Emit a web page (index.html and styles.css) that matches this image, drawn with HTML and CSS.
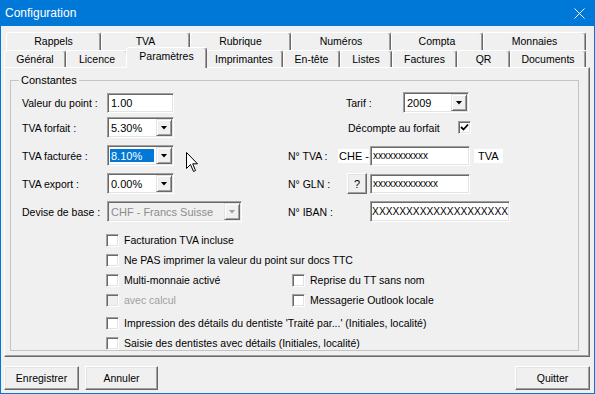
FILE: index.html
```html
<!DOCTYPE html>
<html><head>
	<meta charset="utf-8">
	<title>Configuration</title>
	<link rel="stylesheet" href="styles.css">
</head><body>
	<div id="window">
		<div id="titlebar">
			<span class="title">Configuration</span>
			<svg class="close" width="11" height="11" viewBox="0 0 11 11"><path d="M0.5 0.5L10.5 10.5M10.5 0.5L0.5 10.5" stroke="#fff" stroke-width="1"/></svg>
		</div>

		<div id="tabs">
			<ul class="tabrow back">
				<li>Rappels</li>
				<li>TVA</li>
				<li>Rubrique</li>
				<li>Numéros</li>
				<li>Compta</li>
				<li>Monnaies</li>
			</ul>
			<ul class="tabrow front">
				<li>Général</li>
				<li>Licence</li>
				<li class="active">Paramètres</li>
				<li>Imprimantes</li>
				<li>En-tête</li>
				<li>Listes</li>
				<li>Factures</li>
				<li>QR</li>
				<li>Documents</li>
			</ul>
		</div>

		<div id="panel">
			<fieldset class="group">
				<legend>Constantes</legend>

				<div class="row r1">
					<div class="left">
						<span class="lbl">Valeur du point :</span>
						<span class="edit short">1.00</span>
					</div>
					<div class="right tarif">
						<span class="lbl">Tarif :</span>
						<span class="combo year"><span class="val">2009</span><span class="drop"></span></span>
					</div>
				</div>

				<div class="row r2">
					<div class="left">
						<span class="lbl">TVA forfait :</span>
						<span class="combo short"><span class="val">5.30%</span><span class="drop"></span></span>
					</div>
					<div class="right forfait">
						<span class="lbl">Décompte au forfait</span>
						<span class="box checked"><svg width="9" height="9" viewBox="0 0 9 9"><path d="M1 4L3.5 6.5L8 1.5" fill="none" stroke="#000" stroke-width="1.8"/></svg></span>
					</div>
				</div>

				<div class="row">
					<div class="left">
						<span class="lbl">TVA facturée :</span>
						<span class="combo short"><span class="val sel">8.10%</span><span class="drop"></span></span>
					</div>
					<div class="right">
						<span class="lbl tva">N° TVA :</span>
						<span class="tag che">CHE -</span>
						<span class="edit code small">xxxxxxxxxxx</span>
						<span class="tag suffix">TVA</span>
					</div>
				</div>

				<div class="row">
					<div class="left">
						<span class="lbl">TVA export :</span>
						<span class="combo short"><span class="val">0.00%</span><span class="drop"></span></span>
					</div>
					<div class="right">
						<span class="lbl gln">N° GLN :</span>
						<span class="btn help">?</span>
						<span class="edit code small gln-edit">xxxxxxxxxxxxx</span>
					</div>
				</div>

				<div class="row">
					<div class="left">
						<span class="lbl">Devise de base :</span>
						<span class="combo wide disabled"><span class="val">CHF - Francs Suisse</span><span class="drop"></span></span>
					</div>
					<div class="right">
						<span class="lbl iban">N° IBAN :</span>
						<span class="edit iban-edit">XXXXXXXXXXXXXXXXXXXX</span>
					</div>
				</div>

				<div class="checks">
					<div class="check"><span class="box"></span>Facturation TVA incluse</div>
					<div class="check"><span class="box"></span>Ne PAS imprimer la valeur du point sur docs TTC</div>
					<div class="check pair">
						<div class="half"><span class="box"></span>Multi-monnaie activé</div>
						<div><span class="box"></span>Reprise du TT sans nom</div>
					</div>
					<div class="check pair">
						<div class="half off"><span class="box"></span>avec calcul</div>
						<div><span class="box"></span>Messagerie Outlook locale</div>
					</div>
					<div class="check gap">
						<span class="box"></span>Impression des détails du dentiste 'Traité par...' (Initiales, localité)
					</div>
					<div class="check"><span class="box"></span>Saisie des dentistes avec détails (Initiales, localité)</div>
				</div>
			</fieldset>
		</div>

		<div id="buttons">
			<span class="btn save">Enregistrer</span>
			<span class="btn cancel">Annuler</span>
			<span class="btn quit">Quitter</span>
		</div>

		<svg class="cursor" width="13" height="21" viewBox="0 0 13 21"><path d="M0.5 0.5L0.5 16.5L4.5 12.5L7.5 19.5L9.5 18.5L6.7 11.8L11.5 11.8Z" fill="#fff" stroke="#000" stroke-width="1"/></svg>
	</div>
</body>
</html>
```

FILE: styles.css
```css
* {
	box-sizing: border-box;
}
body {
	margin: 0;
	font-family: "Liberation Sans", Arial, sans-serif;
	font-size: 10.5px;
	color: #000;
}
#window {
	position: relative;
	width: 595px;
	height: 394px;
	background-color: #f0f0f0;
	border: 1px solid #0078d7;
	border-top: 0;
	display: flex;
	flex-direction: column;
}

/* title bar */
#titlebar {
	height: 26px;
	flex: none;
	display: flex;
	align-items: center;
	justify-content: space-between;
	padding: 0 9px 0 4px;
	background-color: #0078d7;
	color: #fff;
	font-size: 12px;
}
.close {
	display: block;
}

/* tabs */
#tabs {
	padding-top: 6px;
	flex: none;
}
.tabrow {
	display: grid;
	margin: 0;
	padding: 0;
	list-style: none;
}
.tabrow.back {
	height: 18px;
	margin-left: 5px;
	grid-template-columns: 95px 89px 101px 100px 92px 103px;
}
.tabrow.front {
	height: 17px;
	margin-left: 3px;
	grid-template-columns: 62px 62px 77px 78px 57px 52px 65px 53px 76px;
}
.tabrow li {
	text-align: center;
	background-color: #f0f0f0;
	border-top: 1px solid #fff;
	border-left: 1px solid #fff;
	border-right: 1px solid #696969;
	box-shadow: inset -1px 0 #a0a0a0;
	border-radius: 3px 3px 0 0;
	line-height: 16px;
}
.tabrow.back li {
	line-height: 17px;
}
.tabrow li.active {
	position: relative;
	z-index: 1;
	height: 21px;
	margin: -3px -2px 0;
	line-height: 17px;
}

/* panel */
#panel {
	height: 290px;
	flex: none;
	margin: 0 4px 0 3px;
	padding: 6px 10px 0 5px;
	border: 1px solid;
	border-color: #fff #696969 #696969 #fff;
	box-shadow: inset -1px -1px #a0a0a0;
}
.group {
	height: 277px;
	margin: 0;
	padding: 0;
	min-width: 0;
	border: 1px solid #c4c4c4;
}
.group legend {
	margin-left: 8px;
	padding: 0 2px;
	line-height: 13px;
	font-size: 11px;
}

.row {
	display: flex;
	align-items: center;
	height: 21px;
	margin-top: 7px;
}
.row.r1 {
	margin-top: 5px;
}
.row.r2 {
	margin-top: 4px;
}
.left {
	width: 277px;
	flex: none;
	display: flex;
	align-items: center;
	padding-left: 11px;
}
.left .lbl {
	width: 85px;
}
.right {
	display: flex;
	align-items: center;
}
.right.tarif {
	padding-left: 58px;
}
.right.tarif .lbl {
	width: 57px;
}
.right.forfait {
	padding-left: 60px;
}
.right.forfait .lbl {
	width: 110px;
}
.lbl.tva {
	width: 50px;
}
.lbl.gln {
	width: 59px;
}
.lbl.iban {
	width: 82px;
}

/* sunken fields */
.edit, .combo {
	display: flex;
	align-items: center;
	background-color: #fff;
	border: 1px solid;
	border-color: #a0a0a0 #fff #fff #a0a0a0;
	box-shadow: inset 1px 1px #696969, inset -1px -1px #e3e3e3;
	white-space: nowrap;
	overflow: hidden;
}
.edit {
	height: 20px;
	padding: 0 3px;
	font-size: 11px;
}
.edit.short {
	width: 67px;
}
.edit.code {
	width: 100px;
	margin-left: 1px;
}
.edit.small {
	font-size: 10px;
	padding-left: 2px;
}
.edit.gln-edit {
	margin-left: 3px;
}
.edit.iban-edit {
	width: 140px;
	height: 21px;
	justify-content: flex-end;
	font-size: 10.2px;
	padding: 0 1px 0 2px;
}
.combo {
	height: 21px;
	padding: 2px 1px 2px 2px;
	font-size: 11px;
}
.combo.short {
	width: 67px;
}
.combo.year {
	width: 66px;
}
.combo.wide {
	width: 135px;
}
.combo .val {
	flex: 1;
	padding-left: 1px;
	overflow: hidden;
}
.combo .val.sel {
	align-self: stretch;
	display: flex;
	align-items: center;
	margin: 1px 2px 1px 0;
	background-color: #0078d7;
	color: #fff;
}
.drop {
	width: 16px;
	height: 17px;
	flex: none;
	display: flex;
	align-items: center;
	justify-content: center;
	background-color: #f0f0f0;
	border: 1px solid;
	border-color: #e3e3e3 #696969 #696969 #e3e3e3;
	box-shadow: inset 1px 1px #fff, inset -1px -1px #a0a0a0;
}
.drop::after {
	content: "";
	width: 7px;
	height: 4px;
	background-color: #000;
	clip-path: polygon(0 0, 100% 0, 50% 100%);
}
.combo.disabled {
	background-color: #f0f0f0;
	color: #8c8c8c;
}
.combo.disabled .drop::after {
	background-color: #a0a0a0;
}

.tag {
	display: flex;
	align-items: center;
	height: 14px;
	background-color: #fff;
	padding-left: 1px;
	font-size: 11px;
}
.tag.che {
	width: 31px;
}
.tag.suffix {
	width: 29px;
	margin-left: 4px;
	padding-left: 4px;
}

/* raised buttons */
.btn {
	display: flex;
	align-items: center;
	justify-content: center;
	background-color: #f0f0f0;
	border: 1px solid;
	border-color: #fff #696969 #696969 #fff;
	box-shadow: inset -1px -1px #a0a0a0, inset 1px 1px #e3e3e3;
}
.btn.help {
	width: 20px;
	height: 21px;
	font-size: 11px;
}

/* checkboxes */
.box {
	width: 13px;
	height: 13px;
	flex: none;
	display: flex;
	align-items: center;
	justify-content: center;
	margin-right: 5px;
	background-color: #fff;
	border: 1px solid;
	border-color: #a0a0a0 #fff #fff #a0a0a0;
	box-shadow: inset 1px 1px #696969, inset -1px -1px #e3e3e3;
}
.forfait .box {
	margin-right: 0;
}
.checks {
	margin: 8px 0 0 95px;
}
.check, .check > div {
	display: flex;
	align-items: center;
	height: 20px;
	white-space: nowrap;
}
.check .half {
	width: 186px;
}
.check.gap {
	margin-top: 3px;
}
.off {
	color: #a0a0a0;
}
.off .box {
	background-color: #f0f0f0;
}

/* bottom buttons */
#buttons {
	display: flex;
	gap: 6px;
	padding: 9px 4px 0 3px;
}
#buttons .btn {
	height: 24px;
	width: 75px;
}
#buttons .btn.cancel {
	width: 73px;
}
#buttons .btn.quit {
	margin-left: auto;
}

.cursor {
	position: absolute;
	left: 185px;
	top: 152px;
}
```
